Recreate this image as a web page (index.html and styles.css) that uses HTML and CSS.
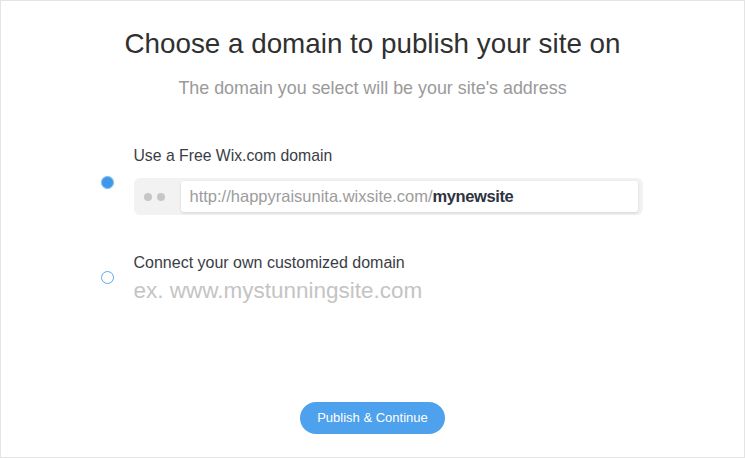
FILE: index.html
```html
<!DOCTYPE html>
<html lang="en">
<head>
	<meta charset="UTF-8">
	<title>Choose a domain</title>
	<link rel="stylesheet" href="styles.css">
</head>
<body>
	<section class="frame">
		<h1 class="title">Choose a domain to publish your site on</h1>
		<p class="subtitle">The domain you select will be your site's address</p>

		<div class="options">
			<div class="option first">
				<span class="radio checked"></span>
				<div class="optBody">
					<p class="optLabel">Use a Free Wix.com domain</p>
					<div class="urlBar">
						<span class="dot"></span>
						<span class="dot"></span>
						<div class="urlIpt">http://happyraisunita.wixsite.com/<b>mynewsite</b></div>
					</div>
				</div>
			</div>
			<div class="option second">
				<span class="radio"></span>
				<div class="optBody">
					<p class="optLabel">Connect your own customized domain</p>
					<p class="placeholder">ex. www.mystunningsite.com</p>
				</div>
			</div>
		</div>

		<a href="javascript:;" class="btnPublish">Publish &amp; Continue</a>
	</section>
</body>
</html>
```

FILE: styles.css
```css
body{
	margin:0;
	font-family:"Liberation Sans", Arial, sans-serif;
	background:#fff;
}
p,h1{
	margin:0;
}
.frame{
	box-sizing:border-box;
	width:745px;
	height:458px;
	border:1px solid #e4e4e4;
	display:flex;
	flex-direction:column;
	align-items:center;
}
.title{
	margin-top:27px;
	font-size:27.8px;
	font-weight:normal;
	line-height:32px;
	color:#303030;
}
.subtitle{
	margin-top:17px;
	font-size:17.9px;
	line-height:22px;
	color:#9a9a9a;
}
.options{
	width:542px;
	margin-top:47px;
	margin-left:-2px;
}
.option{
	display:flex;
}
.option.second{
	margin-top:38px;
}
.radio{
	box-sizing:border-box;
	width:13px;
	height:13px;
	margin-right:20px;
	border-radius:50%;
	border:1px solid #5aa8ee;
	background:#fff;
	flex-shrink:0;
}
.first .radio{
	margin-top:30px;
}
.second .radio{
	margin-top:18px;
}
.radio.checked{
	background:#3f97ea;
	border-color:#8cc2f2;
	box-shadow:0 0 1px #a9d1f5;
}
.optBody{
	flex:1;
}
.optLabel{
	font-size:16px;
	line-height:20px;
	color:#3a3d45;
}
.first .optLabel{
	font-size:15.75px;
}
.urlBar{
	box-sizing:border-box;
	display:flex;
	align-items:center;
	height:37px;
	margin-top:12px;
	padding:3px 5px 3px 10px;
	background:#f2f2f3;
	border-radius:6px;
}
.dot{
	width:8px;
	height:8px;
	margin-right:5px;
	border-radius:50%;
	background:#c6c6c8;
}
.urlIpt{
	flex:1;
	height:31px;
	margin-left:11px;
	padding-left:9px;
	line-height:31px;
	font-size:16.5px;
	color:#9c9c9c;
	background:#fff;
	border-radius:3px;
	box-shadow:0 1px 3px rgba(0,0,0,.13);
}
.urlIpt b{
	color:#2d3340;
	font-weight:bold;
	letter-spacing:-0.4px;
}
.placeholder{
	margin-top:5px;
	font-size:22.5px;
	line-height:26px;
	color:#c4c4c4;
}
.btnPublish{
	margin-top:auto;
	margin-bottom:23px;
	width:145px;
	height:32px;
	line-height:32px;
	text-align:center;
	border-radius:16px;
	background:#4ea1ec;
	color:#fff;
	font-size:13px;
	text-decoration:none;
}
```
